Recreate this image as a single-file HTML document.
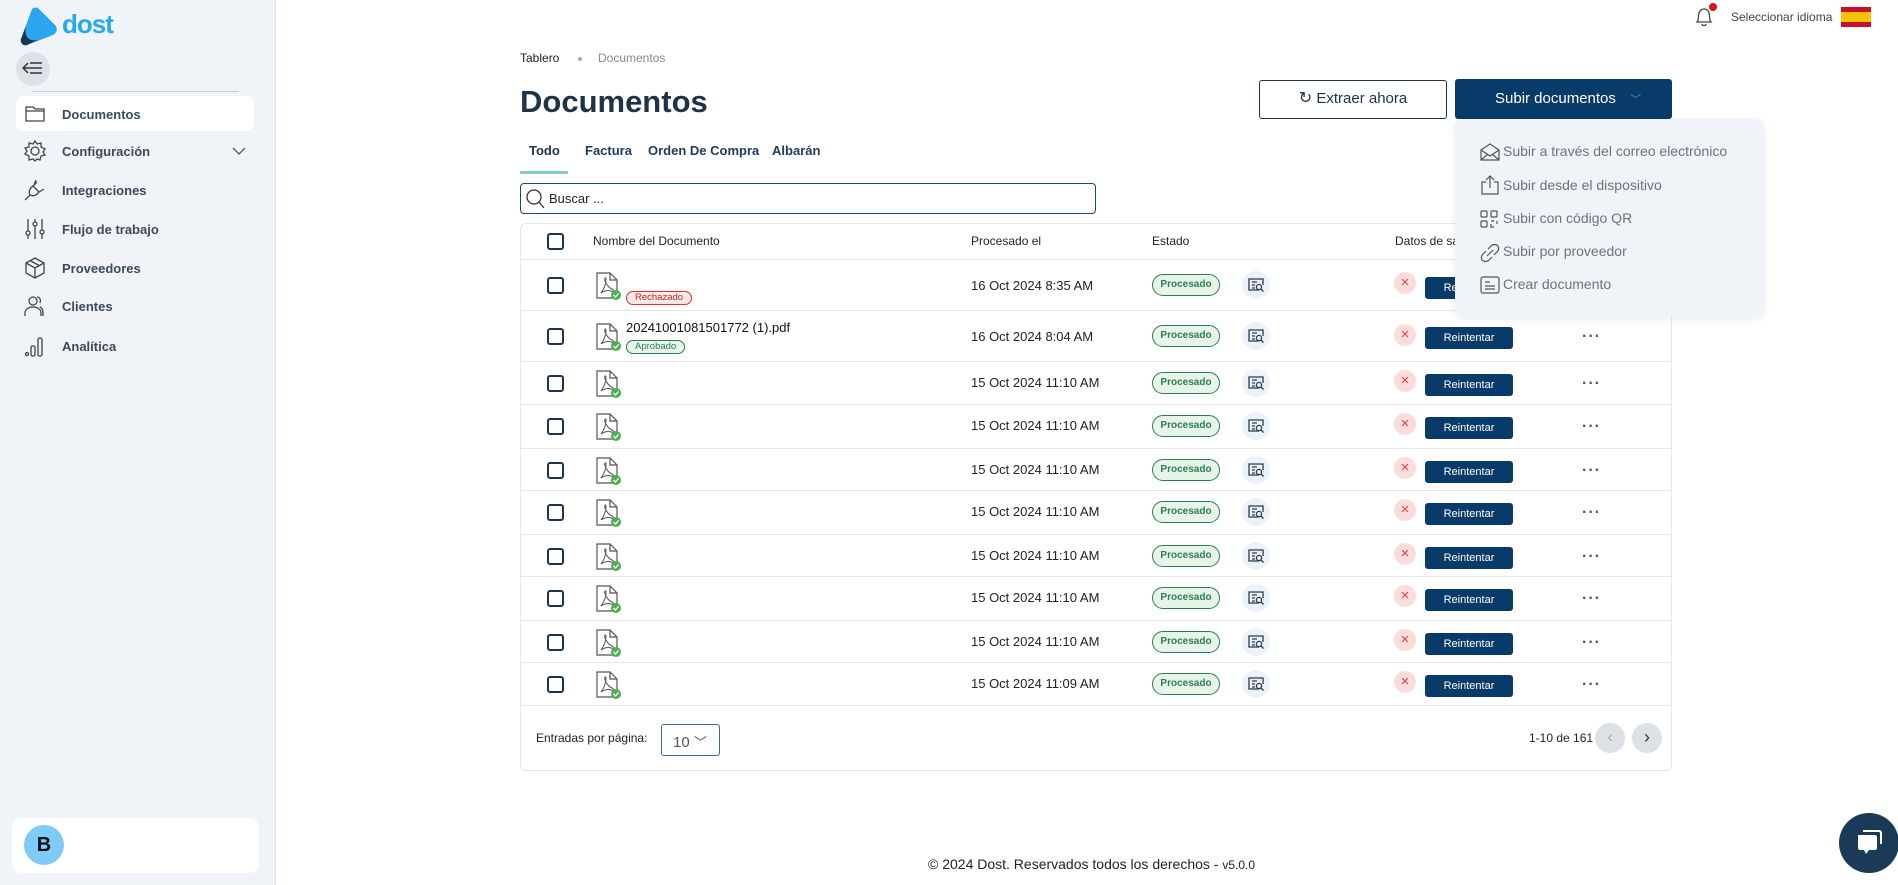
<!DOCTYPE html>
<html><head><meta charset="utf-8">
<style>
*{box-sizing:border-box;margin:0;padding:0}
body{width:1898px;height:885px;position:relative;overflow:hidden;background:#fff;font-family:"Liberation Sans",sans-serif;color:#1f2d3d}
.a{position:absolute}
#side{left:0;top:0;width:276px;height:885px;background:#f0f3f7;border-right:1px solid #dfe3e8}
.mi{position:absolute;left:16px;width:238px;height:36px;font-size:13px;font-weight:bold;color:#3d4a5a}
.mi span{position:absolute;left:46px;top:11px}
.mi svg{position:absolute;left:8px;top:7px}
.row{position:absolute;left:520px;width:1152px;border-top:1px solid #e3e6ea}
.cb{position:absolute;left:27px;width:17px;height:17px;border:2px solid #1b3550;border-radius:3px}
.dt{position:absolute;left:451px;font-size:13px;color:#222}
.bd{position:absolute;left:632px;width:68px;height:22px;border:1.5px solid #2e7d4f;background:#e6f4ea;color:#2e7d4f;border-radius:11px;font-size:10px;font-weight:bold;text-align:center;line-height:19px}
.pv{position:absolute;left:722px;width:28px;height:28px;border-radius:50%;background:#eaf2fb}
.pv svg{position:absolute;left:6px;top:6px}
.xx{position:absolute;left:874px;width:22px;height:22px;border-radius:50%;background:#fbdcdc;color:#e04545;font-size:15px;text-align:center;line-height:21px}
.rb{position:absolute;left:905px;width:88px;height:22px;background:#083b6a;border-radius:3px;color:#fff;font-size:11px;text-align:center;line-height:22px}
.dots{position:absolute;left:1062px;font-size:16px;color:#555;letter-spacing:1px;font-weight:bold}
.pdf{position:absolute;left:75px}
.dd{font-size:14px;color:#6b7280;position:absolute;left:48px}
.ddi{position:absolute;left:25px}
</style></head><body>

<div id="side" class="a">
  <svg class="a" style="left:18px;top:6px" width="42" height="42" viewBox="0 0 42 42"><path d="M14 3 C16 1 19 1 21 3 L37 19 C40 22 39 27 35 29 L9 39 C5 40 2 37 3 33 Z" fill="#2aa7f0"/><path d="M3 33 L8 20 C6 30 10 36 20 34 L9 39 C5 40 2 37 3 33Z" fill="#163650"/></svg>
  <div class="a" style="left:62px;top:9px;font-size:26px;font-weight:bold;color:#2aa7f0;letter-spacing:-1px">dost</div>
  <div class="a" style="left:16px;top:52px;width:34px;height:34px;border-radius:50%;background:#dde2e8"></div>
  <svg class="a" style="left:22px;top:60px" width="22" height="18" viewBox="0 0 22 18" fill="none" stroke="#333" stroke-width="1.5"><path d="M6 3 L1 8 L6 13 M1 8 H20 M8 3 H20 M8 13 H20"/></svg>
  <div class="a" style="left:32px;top:91px;width:207px;height:1px;background:#c9ced4"></div>
  <div class="mi" style="top:96px;height:35px;background:#fff;border-radius:8px"><svg width="22" height="20" viewBox="0 0 22 20" fill="none" stroke="#444" stroke-width="1.3"><path d="M2 4 H9 L11 6 H20 V18 H2 Z M2 8 H20"/></svg><span>Documentos</span></div>
  <div class="mi" style="top:133px"><svg width="22" height="22" viewBox="0 0 22 22" fill="none" stroke="#444" stroke-width="1.3"><circle cx="11" cy="11" r="4"/><path d="M11 1 L13 4 L17 3 L17 7 L21 9 L19 12 L21 15 L17 16 L16 20 L13 19 L11 21 L9 19 L5 20 L5 16 L1 14 L3 11 L1 8 L5 7 L5 3 L9 4 Z"/></svg><span>Configuración</span></div>
  <svg class="a" style="left:232px;top:147px" width="14" height="8" viewBox="0 0 14 8" fill="none" stroke="#555" stroke-width="1.3"><path d="M1 1 L7 7 L13 1"/></svg>
  <div class="mi" style="top:172px"><svg width="22" height="22" viewBox="0 0 22 22" fill="none" stroke="#444" stroke-width="1.3"><path d="M1 21 L6 16 M6 16 C4 13 6 9 9 7 L15 13 C13 16 9 18 6 16 M9 7 L13 3 M15 13 L20 10 M12 1 L10 6"/></svg><span>Integraciones</span></div>
  <div class="mi" style="top:211px"><svg width="22" height="22" viewBox="0 0 22 22" fill="none" stroke="#444" stroke-width="1.3"><path d="M4 1 V21 M11 1 V21 M18 1 V21"/><circle cx="4" cy="15" r="2" fill="#f0f3f7"/><circle cx="11" cy="6" r="2" fill="#f0f3f7"/><circle cx="18" cy="14" r="2" fill="#f0f3f7"/></svg><span>Flujo de trabajo</span></div>
  <div class="mi" style="top:250px"><svg width="22" height="22" viewBox="0 0 22 22" fill="none" stroke="#444" stroke-width="1.3"><path d="M11 1 L20 6 V16 L11 21 L2 16 V6 Z M2 6 L11 11 L20 6 M11 11 V21 M6 3.5 L15 8.5"/></svg><span>Proveedores</span></div>
  <div class="mi" style="top:288px"><svg width="22" height="22" viewBox="0 0 22 22" fill="none" stroke="#444" stroke-width="1.3"><circle cx="9" cy="6" r="4"/><path d="M1 21 V18 C1 14 5 12 9 12 C13 12 17 14 17 18 V21 M13 2 C16 2 17 5 16 8 M19 21 V18 C19 15 18 13 16 12"/></svg><span>Clientes</span></div>
  <div class="mi" style="top:328px"><svg width="22" height="22" viewBox="0 0 22 22" fill="none" stroke="#444" stroke-width="1.3"><circle cx="3" cy="19" r="1.5"/><rect x="7" y="11" width="4" height="10" rx="1.5"/><rect x="14" y="3" width="4" height="18" rx="1.5"/></svg><span>Analítica</span></div>
  <div class="a" style="left:12px;top:818px;width:247px;height:55px;background:#fff;border-radius:10px"></div>
  <div class="a" style="left:24px;top:825px;width:40px;height:40px;border-radius:50%;background:#7fcbf7;font-size:20px;font-weight:bold;color:#111;text-align:center;line-height:40px">B</div>
</div>

<!-- top bar -->
<svg class="a" style="left:1694px;top:6px" width="20" height="22" viewBox="0 0 20 22" fill="none" stroke="#444" stroke-width="1.3"><path d="M3 16 C5 14 4 10 5 7 C6 4 8 3 10 3 C12 3 14 4 15 7 C16 10 15 14 17 16 Z M8 18 C8 20 12 20 12 18"/></svg>
<div class="a" style="left:1709px;top:3px;width:8px;height:8px;border-radius:50%;background:#d9141b"></div>
<div class="a" style="left:1731px;top:10px;font-size:12px;color:#444">Seleccionar idioma</div>
<div class="a" style="left:1841px;top:7px;width:30px;height:20px;background:#c8102e"><div style="margin-top:5px;height:10px;background:#f5c400"></div></div>

<!-- header -->
<div class="a" style="left:520px;top:51px;font-size:12px;color:#222">Tablero</div>
<div class="a" style="left:578px;top:57px;width:4px;height:4px;border-radius:50%;background:#aaa"></div>
<div class="a" style="left:598px;top:51px;font-size:12px;color:#888">Documentos</div>
<div class="a" style="left:520px;top:84px;font-size:31px;font-weight:bold;color:#1f3347">Documentos</div>
<div class="a" style="left:1259px;top:80px;width:188px;height:39px;border:1.5px solid #1f3347;border-radius:3px;font-size:15px;color:#1f3347;text-align:center;line-height:36px"><span style="font-size:16px">↻</span> Extraer ahora</div>
<div class="a" style="left:1455px;top:79px;width:217px;height:40px;background:#083b6a;border-radius:3px;font-size:15px;color:#fff;line-height:40px;padding-left:40px">Subir documentos <span style="color:#6a8aaa;font-size:11px;margin-left:10px">﹀</span></div>

<div class="a" style="left:529px;top:143px;font-size:13px;font-weight:bold;color:#1f3347">Todo</div>
<div class="a" style="left:585px;top:143px;font-size:13px;font-weight:bold;color:#1f3a5a">Factura</div>
<div class="a" style="left:648px;top:143px;font-size:13px;font-weight:bold;color:#1f3a5a">Orden De Compra</div>
<div class="a" style="left:772px;top:143px;font-size:13px;font-weight:bold;color:#1f3a5a">Albarán</div>
<div class="a" style="left:520px;top:171px;width:48px;height:3px;background:#80cbc4"></div>

<div class="a" style="left:520px;top:183px;width:576px;height:31px;border:1.3px solid #1f4870;border-radius:4px"></div>
<svg class="a" style="left:525px;top:188px" width="20" height="22" viewBox="0 0 20 22" fill="none" stroke="#333" stroke-width="1.3"><circle cx="9" cy="9" r="7"/><path d="M14 14 L19 20"/></svg>
<div class="a" style="left:549px;top:191px;font-size:13px;color:#222">Buscar ...</div>

<!-- table -->
<div class="a" style="left:520px;top:223px;width:1152px;height:548px;border:1px solid #e3e6ea;border-radius:6px"></div>
<div class="row" style="top:223px;height:36px;border-top:none">
  <div class="cb" style="top:10px"></div>
  <div class="a" style="left:73px;top:11px;font-size:12px;color:#222">Nombre del Documento</div>
  <div class="a" style="left:451px;top:11px;font-size:12px;color:#222">Procesado el</div>
  <div class="a" style="left:632px;top:11px;font-size:12px;color:#222">Estado</div>
  <div class="a" style="left:875px;top:11px;font-size:12px;color:#222">Datos de salida</div>
</div>

<svg width="0" height="0" style="position:absolute"><defs>
<symbol id="pdf" viewBox="0 0 26 28"><path d="M2 1 H15 L22 8 V26 H2 Z M15 1 V8 H22" fill="#fff" stroke="#555" stroke-width="1.2"/><path d="M6 21 C9 17 11 12 11 7 C11 5 9 6 10 9 C11 12 14 16 17 17 C19 18 19 20 16 19 C13 18 9 19 6 21Z" fill="none" stroke="#555" stroke-width="1"/><circle cx="21" cy="23" r="5" fill="#4caf50"/><path d="M18.5 23 L20.5 25 L23.5 21.5" stroke="#fff" stroke-width="1.3" fill="none"/></symbol>
<symbol id="pv" viewBox="0 0 16 16"><path d="M11 13 H1 V2 H15 V8 M4 5 H9 M4 8 H7 M4 11 H7" fill="none" stroke="#2a3a50" stroke-width="1.3"/><circle cx="11" cy="10" r="2.6" fill="none" stroke="#2a3a50" stroke-width="1.3"/><path d="M13 12 L15.5 14.5" stroke="#2a3a50" stroke-width="1.3"/></symbol>
</defs></svg>

<div class="row" style="top:259px;height:51px">
  <div class="cb" style="top:17px"></div>
  <svg class="pdf" style="top:12px" width="26" height="28"><use href="#pdf"/></svg>
  <div class="a" style="left:106px;top:31px;height:14px;padding:0 8px;border:1px solid #d33;background:#fde8e8;color:#c62828;border-radius:7px;font-size:9.5px;line-height:12px">Rechazado</div>
  <div class="dt" style="top:18px">16 Oct 2024 8:35 AM</div>
  <div class="bd" style="top:14px">Procesado</div>
  <div class="pv" style="top:11px"><svg width="16" height="16"><use href="#pv"/></svg></div>
  <div class="xx" style="top:12px">×</div><div class="rb" style="top:17px">Reintentar</div>
</div>
<div class="row" style="top:310px;height:51px">
  <div class="cb" style="top:17px"></div>
  <svg class="pdf" style="top:12px" width="26" height="28"><use href="#pdf"/></svg>
  <div class="a" style="left:106px;top:9px;font-size:13px;color:#111">20241001081501772 (1).pdf</div>
  <div class="a" style="left:106px;top:29px;height:14px;padding:0 8px;border:1px solid #2e7d4f;background:#e6f4ea;color:#2e7d4f;border-radius:7px;font-size:9.5px;line-height:12px">Aprobado</div>
  <div class="dt" style="top:18px">16 Oct 2024 8:04 AM</div>
  <div class="bd" style="top:14px">Procesado</div>
  <div class="pv" style="top:11px"><svg width="16" height="16"><use href="#pv"/></svg></div>
  <div class="xx" style="top:13px">×</div><div class="rb" style="top:16px">Reintentar</div><div class="dots" style="top:17px">···</div>
</div>

<div class="row" style="top:361px;height:43px"><div class="cb" style="top:13px"></div><svg class="pdf" style="top:8px" width="26" height="28"><use href="#pdf"/></svg><div class="dt" style="top:13px">15 Oct 2024 11:10 AM</div><div class="bd" style="top:10px">Procesado</div><div class="pv" style="top:7px"><svg width="16" height="16"><use href="#pv"/></svg></div><div class="xx" style="top:8px">×</div><div class="rb" style="top:12px">Reintentar</div><div class="dots" style="top:13px">···</div></div>
<div class="row" style="top:404px;height:44px"><div class="cb" style="top:13px"></div><svg class="pdf" style="top:8px" width="26" height="28"><use href="#pdf"/></svg><div class="dt" style="top:13px">15 Oct 2024 11:10 AM</div><div class="bd" style="top:10px">Procesado</div><div class="pv" style="top:7px"><svg width="16" height="16"><use href="#pv"/></svg></div><div class="xx" style="top:8px">×</div><div class="rb" style="top:12px">Reintentar</div><div class="dots" style="top:13px">···</div></div>
<div class="row" style="top:448px;height:42px"><div class="cb" style="top:13px"></div><svg class="pdf" style="top:8px" width="26" height="28"><use href="#pdf"/></svg><div class="dt" style="top:13px">15 Oct 2024 11:10 AM</div><div class="bd" style="top:10px">Procesado</div><div class="pv" style="top:7px"><svg width="16" height="16"><use href="#pv"/></svg></div><div class="xx" style="top:8px">×</div><div class="rb" style="top:12px">Reintentar</div><div class="dots" style="top:13px">···</div></div>
<div class="row" style="top:490px;height:44px"><div class="cb" style="top:13px"></div><svg class="pdf" style="top:8px" width="26" height="28"><use href="#pdf"/></svg><div class="dt" style="top:13px">15 Oct 2024 11:10 AM</div><div class="bd" style="top:10px">Procesado</div><div class="pv" style="top:7px"><svg width="16" height="16"><use href="#pv"/></svg></div><div class="xx" style="top:8px">×</div><div class="rb" style="top:12px">Reintentar</div><div class="dots" style="top:13px">···</div></div>
<div class="row" style="top:534px;height:42px"><div class="cb" style="top:13px"></div><svg class="pdf" style="top:8px" width="26" height="28"><use href="#pdf"/></svg><div class="dt" style="top:13px">15 Oct 2024 11:10 AM</div><div class="bd" style="top:10px">Procesado</div><div class="pv" style="top:7px"><svg width="16" height="16"><use href="#pv"/></svg></div><div class="xx" style="top:8px">×</div><div class="rb" style="top:12px">Reintentar</div><div class="dots" style="top:13px">···</div></div>
<div class="row" style="top:576px;height:44px"><div class="cb" style="top:13px"></div><svg class="pdf" style="top:8px" width="26" height="28"><use href="#pdf"/></svg><div class="dt" style="top:13px">15 Oct 2024 11:10 AM</div><div class="bd" style="top:10px">Procesado</div><div class="pv" style="top:7px"><svg width="16" height="16"><use href="#pv"/></svg></div><div class="xx" style="top:8px">×</div><div class="rb" style="top:12px">Reintentar</div><div class="dots" style="top:13px">···</div></div>
<div class="row" style="top:620px;height:42px"><div class="cb" style="top:13px"></div><svg class="pdf" style="top:8px" width="26" height="28"><use href="#pdf"/></svg><div class="dt" style="top:13px">15 Oct 2024 11:10 AM</div><div class="bd" style="top:10px">Procesado</div><div class="pv" style="top:7px"><svg width="16" height="16"><use href="#pv"/></svg></div><div class="xx" style="top:8px">×</div><div class="rb" style="top:12px">Reintentar</div><div class="dots" style="top:13px">···</div></div>
<div class="row" style="top:662px;height:43px"><div class="cb" style="top:13px"></div><svg class="pdf" style="top:8px" width="26" height="28"><use href="#pdf"/></svg><div class="dt" style="top:13px">15 Oct 2024 11:09 AM</div><div class="bd" style="top:10px">Procesado</div><div class="pv" style="top:7px"><svg width="16" height="16"><use href="#pv"/></svg></div><div class="xx" style="top:8px">×</div><div class="rb" style="top:12px">Reintentar</div><div class="dots" style="top:13px">···</div></div>
<div class="row" style="top:705px;height:66px">
  <div class="a" style="left:16px;top:25px;font-size:12px;color:#222">Entradas por página:</div>
  <div class="a" style="left:141px;top:18px;width:59px;height:32px;border:1.3px solid #3d6a99;border-radius:3px;font-size:15px;color:#555;padding:7px 0 0 11px">10 <span style="font-size:13px">﹀</span></div>
  <div class="a" style="left:1009px;top:25px;font-size:12px;color:#222">1-10 de 161</div>
  <div class="a" style="left:1075px;top:17px;width:30px;height:30px;border-radius:50%;background:#dde1e6;color:#aaa;text-align:center;line-height:29px;font-size:16px">‹</div>
  <div class="a" style="left:1112px;top:17px;width:30px;height:30px;border-radius:50%;background:#dde1e6;color:#1f3347;text-align:center;line-height:29px;font-size:18px">›</div>
</div>

<div class="a" style="left:928px;top:856px;font-size:14px;color:#222">© 2024 Dost. Reservados todos los derechos - <span style="font-size:12px">v5.0.0</span></div>

<!-- dropdown -->
<div class="a" style="left:1455px;top:119px;width:309px;height:198px;background:#f0f3f7;border-radius:8px;box-shadow:0 2px 8px rgba(0,0,0,0.08)">
  <svg class="ddi" style="top:24px" width="20" height="18" viewBox="0 0 20 18" fill="none" stroke="#555" stroke-width="1.2"><path d="M1 7 L10 1 L19 7 V17 H1 Z M1 7 L10 13 L19 7 M1 17 L8 11 M19 17 L12 11"/></svg>
  <div class="dd" style="top:24px">Subir a través del correo electrónico</div>
  <svg class="ddi" style="top:56px" width="20" height="20" viewBox="0 0 20 20" fill="none" stroke="#555" stroke-width="1.2"><path d="M6 7 H2 V19 H18 V7 H14 M10 13 V1 M6 5 L10 1 L14 5"/></svg>
  <div class="dd" style="top:58px">Subir desde el dispositivo</div>
  <svg class="ddi" style="top:91px" width="18" height="18" viewBox="0 0 18 18" fill="none" stroke="#555" stroke-width="1.2"><rect x="1" y="1" width="6" height="6" rx="1"/><rect x="11" y="1" width="6" height="6" rx="1"/><rect x="1" y="11" width="6" height="6" rx="1"/><path d="M11 11 H14 M17 11 V14 M11 14 V17 H14 M17 17 V17"/></svg>
  <div class="dd" style="top:91px">Subir con código QR</div>
  <svg class="ddi" style="top:124px" width="20" height="20" viewBox="0 0 20 20" fill="none" stroke="#555" stroke-width="1.2"><path d="M8 6 L11 3 C13 1 16 1 18 3 C19 5 19 7 17 9 L14 12 M12 14 L9 17 C7 19 4 19 2 17 C1 15 1 13 3 11 L6 8 M7 13 L13 7"/></svg>
  <div class="dd" style="top:124px">Subir por proveedor</div>
  <svg class="ddi" style="top:157px" width="20" height="18" viewBox="0 0 20 18" fill="none" stroke="#555" stroke-width="1.2"><rect x="1" y="1" width="18" height="16" rx="2"/><path d="M5 6 H10 M5 10 H15 M5 13 H15"/></svg>
  <div class="dd" style="top:157px">Crear documento</div>
</div>

<!-- chat -->
<div class="a" style="left:1839px;top:813px;width:60px;height:60px;border-radius:50%;background:#1b3a57"></div>
<svg class="a" style="left:1855px;top:828px" width="28" height="28" viewBox="0 0 28 28"><path d="M8 3 H24 C26 3 26 5 26 6 V16" fill="none" stroke="#fff" stroke-width="2"/><path d="M3 7 H20 C22 7 22 9 22 10 V20 C22 22 20 22 19 22 H14 L11 26 L9 22 H5 C3 22 3 20 3 19 Z" fill="#fff"/></svg>
</body></html>
